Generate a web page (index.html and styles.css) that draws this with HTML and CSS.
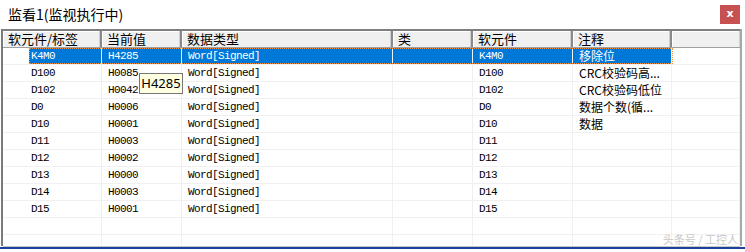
FILE: index.html
```html
<!DOCTYPE html>
<html lang="zh">
<head>
    <meta charset="UTF-8">
    <title>监看1</title>
    <link rel="stylesheet" href="styles.css">
</head>
<body>
    <div class="window">
        <div class="titlebar">
            <span class="title">监看1(监视执行中)</span>
            <span class="close">x</span>
        </div>

        <div class="grid">
            <div class="head">
                <div class="c1">软元件/标签</div>
                <div class="c2">当前值</div>
                <div class="c3">数据类型</div>
                <div class="c4">类</div>
                <div class="c5">软元件</div>
                <div class="c6">注释</div>
                <div class="c7"></div>
            </div>

            <div class="row selected">
                <div class="c1"><span class="v">K4M0</span></div>
                <div class="c2">H4285</div>
                <div class="c3">Word[Signed]</div>
                <div class="c4"></div>
                <div class="c5">K4M0</div>
                <div class="c6 cn">移除位</div>
                <div class="c7"></div>
            </div>
            <div class="row">
                <div class="c1"><span class="v">D100</span></div>
                <div class="c2">H0085</div>
                <div class="c3">Word[Signed]</div>
                <div class="c4"></div>
                <div class="c5">D100</div>
                <div class="c6 cn">CRC校验码高...</div>
                <div class="c7"></div>
            </div>
            <div class="row">
                <div class="c1"><span class="v">D102</span></div>
                <div class="c2">H0042</div>
                <div class="c3">Word[Signed]</div>
                <div class="c4"></div>
                <div class="c5">D102</div>
                <div class="c6 cn">CRC校验码低位</div>
                <div class="c7"></div>
            </div>
            <div class="row">
                <div class="c1"><span class="v">D0</span></div>
                <div class="c2">H0006</div>
                <div class="c3">Word[Signed]</div>
                <div class="c4"></div>
                <div class="c5">D0</div>
                <div class="c6 cn">数据个数(循...</div>
                <div class="c7"></div>
            </div>
            <div class="row">
                <div class="c1"><span class="v">D10</span></div>
                <div class="c2">H0001</div>
                <div class="c3">Word[Signed]</div>
                <div class="c4"></div>
                <div class="c5">D10</div>
                <div class="c6 cn">数据</div>
                <div class="c7"></div>
            </div>
            <div class="row">
                <div class="c1"><span class="v">D11</span></div>
                <div class="c2">H0003</div>
                <div class="c3">Word[Signed]</div>
                <div class="c4"></div>
                <div class="c5">D11</div>
                <div class="c6"></div>
                <div class="c7"></div>
            </div>
            <div class="row">
                <div class="c1"><span class="v">D12</span></div>
                <div class="c2">H0002</div>
                <div class="c3">Word[Signed]</div>
                <div class="c4"></div>
                <div class="c5">D12</div>
                <div class="c6"></div>
                <div class="c7"></div>
            </div>
            <div class="row">
                <div class="c1"><span class="v">D13</span></div>
                <div class="c2">H0000</div>
                <div class="c3">Word[Signed]</div>
                <div class="c4"></div>
                <div class="c5">D13</div>
                <div class="c6"></div>
                <div class="c7"></div>
            </div>
            <div class="row">
                <div class="c1"><span class="v">D14</span></div>
                <div class="c2">H0003</div>
                <div class="c3">Word[Signed]</div>
                <div class="c4"></div>
                <div class="c5">D14</div>
                <div class="c6"></div>
                <div class="c7"></div>
            </div>
            <div class="row">
                <div class="c1"><span class="v">D15</span></div>
                <div class="c2">H0001</div>
                <div class="c3">Word[Signed]</div>
                <div class="c4"></div>
                <div class="c5">D15</div>
                <div class="c6"></div>
                <div class="c7"></div>
            </div>
            <div class="row">
                <div class="c1"></div><div class="c2"></div><div class="c3"></div><div class="c4"></div>
                <div class="c5"></div><div class="c6"></div><div class="c7"></div>
            </div>
            <div class="row last">
                <div class="c1"></div><div class="c2"></div><div class="c3"></div><div class="c4"></div>
                <div class="c5"></div><div class="c6"></div><div class="c7"></div>
            </div>

            <div class="tooltip">H4285</div>
            <div class="watermark">头条号 / 工控人</div>
        </div>
        <div class="bottom-line"></div>
    </div>
</body>
</html>
```

FILE: styles.css
```css
body {
    margin: 0;
    background: #fff;
    width: 745px;
    height: 252px;
    overflow: hidden;
}
.window {
    position: relative;
    width: 745px;
    height: 252px;
}
.titlebar {
    height: 29px;
    display: flex;
    align-items: center;
    justify-content: space-between;
    padding: 0 5px 0 8px;
}
.title {
    font-family: "Noto Sans CJK SC", sans-serif;
    font-size: 14px;
    color: #000;
    margin-top: -2px;
}
.close {
    width: 20px;
    height: 19px;
    margin-top: -1px;
    background: #c75050;
    color: #fff;
    font-family: "DejaVu Sans", sans-serif;
    font-weight: bold;
    font-size: 11px;
    line-height: 17px;
    text-align: center;
}
.grid {
    position: relative;
    margin-left: 1px;
    width: 737px;
    height: 217px;
    border-left: 2px solid #7a7a7a;
    border-right: 2px solid #a8a8a8;
}
.head,
.row {
    display: flex;
}
.head {
    height: 16px;
    border-top: 2px solid #7f7f7f;
    border-bottom: 1px solid #a0a0a0;
    background: #f0f0f0;
    font-family: "Noto Sans CJK SC", sans-serif;
    font-size: 13px;
    line-height: 16px;
    color: #000;
}
.head > div {
    box-sizing: border-box;
    padding-left: 5px;
    border-right: 2px solid #8a8a8a;
    box-shadow: inset -1px 0 0 #d0d0d0, inset 1px 1px 0 #fff;
    white-space: nowrap;
}
.head .c7 {
    border-right: none;
}
.row {
    height: 16px;
    border-bottom: 1px solid #f0f0f0;
    font-family: "Liberation Mono", monospace;
    font-size: 11px;
    letter-spacing: -0.6px;
    line-height: 17px;
    color: #000;
}
.row > div {
    box-sizing: border-box;
    padding-left: 6px;
    border-right: 1px solid #f0f0f0;
    white-space: nowrap;
}
.row .c1 {
    padding-left: 26px;
}
.row .v {
    display: block;
    height: 16px;
    padding-left: 2px;
}
.row .cn {
    font-family: "Noto Sans CJK SC", sans-serif;
    font-size: 12px;
    letter-spacing: 0;
    line-height: 16px;
}
.row.last {
    height: 11px;
    border-bottom: 1px solid #c8c8c8;
}
.c1 { width: 99px; }
.c2 { width: 80px; }
.c3 { width: 211px; }
.c4 { width: 80px; }
.c5 { width: 100px; }
.c6 { width: 99px; }
.c7 { flex: 1; }

.selected {
    position: relative;
    color: #fff;
}
.selected .c2,
.selected .c3,
.selected .c4,
.selected .c5,
.selected .c6,
.selected .v {
    background: #0078d7;
}
.selected::after {
    content: "";
    position: absolute;
    left: 26px;
    right: 67px;
    top: 0;
    bottom: 0;
    border: 1px dotted #f09040;
}
.tooltip {
    position: absolute;
    left: 136px;
    top: 44px;
    width: 42px;
    height: 19px;
    border: 1px solid #767676;
    background: #ffffe1;
    font-family: "Noto Sans", sans-serif;
    font-size: 13px;
    line-height: 19px;
    text-align: center;
    color: #000;
}
.watermark {
    position: absolute;
    right: 2px;
    bottom: 1px;
    font-family: "Noto Sans CJK SC", sans-serif;
    font-size: 11px;
    color: #c8c8c8;
    line-height: 12px;
}
.bottom-line {
    height: 2px;
    margin-top: 1px;
    background: #1c3f9a;
}
```
